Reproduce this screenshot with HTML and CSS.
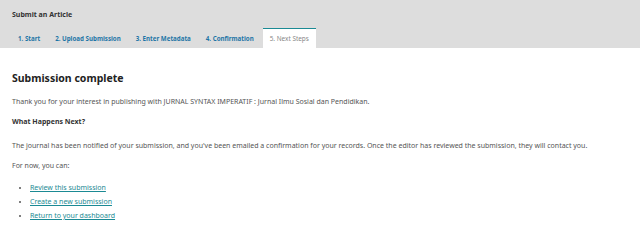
FILE: index.html
```html
<!DOCTYPE html>
<html>
<head>
  <title>Submit an Article</title>
  <link rel="stylesheet" href="styles.css">
</head>
<body>
  <div class="page-header">
    <h1 class="page-title">Submit an Article</h1>
    <ul class="tabs">
      <li class="tab"><a href="#">1. Start</a></li>
      <li class="tab"><a href="#">2. Upload Submission</a></li>
      <li class="tab"><a href="#">3. Enter Metadata</a></li>
      <li class="tab"><a href="#">4. Confirmation</a></li>
      <li class="tab active"><a href="#">5. Next Steps</a></li>
    </ul>
  </div>

  <div class="content">
    <h2 class="title">Submission complete</h2>
    <p class="text">Thank you for your interest in publishing with JURNAL SYNTAX IMPERATIF : Jurnal Ilmu Sosial dan Pendidikan.</p>
    <h3 class="subtitle">What Happens Next?</h3>
    <p class="text journal">The journal has been notified of your submission, and you've been emailed a confirmation for your records. Once the editor has reviewed the submission, they will contact you.</p>
    <p class="text">For now, you can:</p>
    <ul class="actions">
      <li><a href="#">Review this submission</a></li>
      <li><a href="#">Create a new submission</a></li>
      <li><a href="#">Return to your dashboard</a></li>
    </ul>
  </div>
</body>
</html>
```

FILE: styles.css
```css
body {
  font-family: "Noto Sans", sans-serif;
  color: #555;
  background: #fff;
  margin: 0;
}
.page-header {
  background: #ddd;
  padding: 0 12px;
  height: 48px;
  display: flex;
  flex-direction: column;
}
.page-title {
  font-size: 7px;
  font-weight: bold;
  color: #333;
  margin: 0;
  padding-top: 10px;
  line-height: 9px;
}
.tabs {
  list-style: none;
  margin: auto 0 0 0;
  padding: 0;
  display: flex;
}
.tab {
  height: 20px;
  display: flex;
  align-items: center;
  padding: 0 6px;
  margin-right: 3px;
  border-top: 1px solid transparent;
  box-sizing: border-box;
}
.tab a {
  font-size: 6.2px;
  font-weight: bold;
  color: #1d75a6;
  text-decoration: none;
}
.tab.active {
  background: #fff;
  border-top: 1px solid #1b8a94;
  padding: 0 7px;
}
.tab.active a {
  font-size: 6.4px;
  font-weight: normal;
  color: #888;
}
.content {
  padding: 0 12px;
}
.title {
  font-size: 10.5px;
  font-weight: bold;
  color: #222;
  margin: 23px 0 0 0;
  line-height: 14px;
}
.subtitle {
  font-size: 7px;
  font-weight: bold;
  color: #333;
  margin: 10px 0 0 0;
  line-height: 10px;
}
.text {
  font-size: 7px;
  line-height: 10px;
  margin: 10px 0 0 0;
}
.title + .text {
  margin-top: 12px;
}
.text.journal {
  margin-top: 14px;
}
.actions {
  margin: 10px 0 0 0;
  padding-left: 18px;
  font-size: 7px;
  line-height: 14px;
}
.actions a {
  color: #1b8a94;
}
```
